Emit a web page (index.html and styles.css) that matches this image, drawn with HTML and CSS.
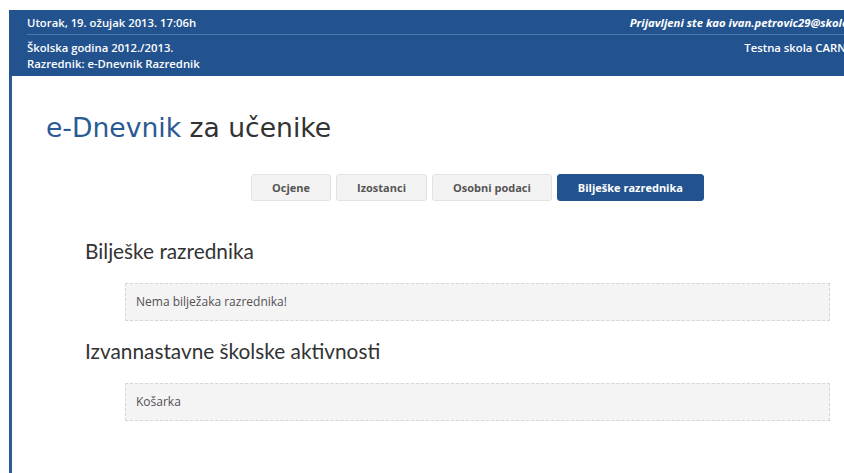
FILE: index.html
```html
<!DOCTYPE html>
<html lang="hr">
<head>
<meta charset="utf-8">
<title>e-Dnevnik za učenike</title>
<link rel="stylesheet" href="styles.css">
</head>
<body>
<div class="page">
  <header class="topbar">
    <div class="topbar-row topbar-row--first">
      <span class="date">Utorak, 19. ožujak 2013. 17:06h</span>
      <span class="login">Prijavljeni ste kao ivan.petrovic29@skole.hr</span>
    </div>
    <div class="topbar-row topbar-row--second">
      <div class="school-info">
        <div>Školska godina 2012./2013.</div>
        <div>Razrednik: e-Dnevnik Razrednik</div>
      </div>
      <div class="school-name">Testna skola CARNet</div>
    </div>
  </header>

  <main class="content">
    <h1 class="title"><span class="brand">e-Dnevnik</span> za učenike</h1>

    <nav class="tabs">
      <a class="tab" href="#">Ocjene</a>
      <a class="tab" href="#">Izostanci</a>
      <a class="tab" href="#">Osobni podaci</a>
      <a class="tab tab--active" href="#">Bilješke razrednika</a>
    </nav>

    <section class="section">
      <h2 class="section-title">Bilješke razrednika</h2>
      <div class="note">Nema bilježaka razrednika!</div>
    </section>

    <section class="section">
      <h2 class="section-title">Izvannastavne školske aktivnosti</h2>
      <div class="note">Košarka</div>
    </section>
  </main>
</div>
</body>
</html>
```

FILE: styles.css
```css
html, body {
  margin: 0;
  padding: 0;
  background: #ffffff;
  overflow: hidden;
}

body {
  font-family: "Open Sans", "DejaVu Sans", sans-serif;
  color: #333333;
}

.page {
  width: 934px;
  margin: 10px 0 0 9px;
}

/* Blue header band */
.topbar {
  background: #23538f;
  color: #ffffff;
  padding: 0 18px;
  font-size: 11.3px;
  font-weight: 600;
}

.topbar-row {
  display: flex;
  justify-content: space-between;
}

.topbar-row--first {
  height: 24px;
  align-items: center;
  border-bottom: 1px solid #4d77ab;
}

.topbar-row--second {
  padding: 5px 0 4px;
  line-height: 16px;
  height: 32px;
}

.login {
  margin-right: 62px;
  font-style: italic;
  font-weight: 700;
}

.school-name {
  margin-right: 68px;
}

/* Main area with the blue rule down the left edge */
.content {
  border-left: 3px solid #2a5a9a;
  min-height: 397px;
  padding: 1px 0 0 34px;
}

.title {
  margin: 33px 0 0;
  font-family: "DejaVu Sans", sans-serif;
  font-weight: normal;
  font-size: 26.6px;
  line-height: 36px;
  color: #333333;
}

.brand {
  color: #2a5a94;
}

.tabs {
  display: flex;
  justify-content: center;
  gap: 5px;
  margin: 28px 0 0 -34px;
}

.tab {
  display: block;
  height: 25px;
  line-height: 25px;
  padding: 0 20px;
  background: #f3f3f3;
  border: 1px solid #e2e2e2;
  border-radius: 3px;
  font-size: 11px;
  font-weight: 700;
  color: #555555;
  text-decoration: none;
}

.tab--active {
  background: #23538f;
  border-color: #23538f;
  color: #ffffff;
}

.section {
  padding-left: 39px;
}

.section-title {
  margin: 0;
  font-family: "Lato", sans-serif;
  font-weight: normal;
  font-size: 20.8px;
  line-height: 26px;
  color: #333333;
}

.section:first-of-type .section-title {
  margin-top: 37px;
}

.section + .section .section-title {
  margin-top: 17px;
}

.note {
  box-sizing: border-box;
  width: 705px;
  height: 38px;
  margin: 19px 0 0 40px;
  padding: 0 10px;
  line-height: 36px;
  background: #f4f4f4;
  border: 1px dashed #d6d6d6;
  font-size: 12px;
  color: #555055;
}
```
